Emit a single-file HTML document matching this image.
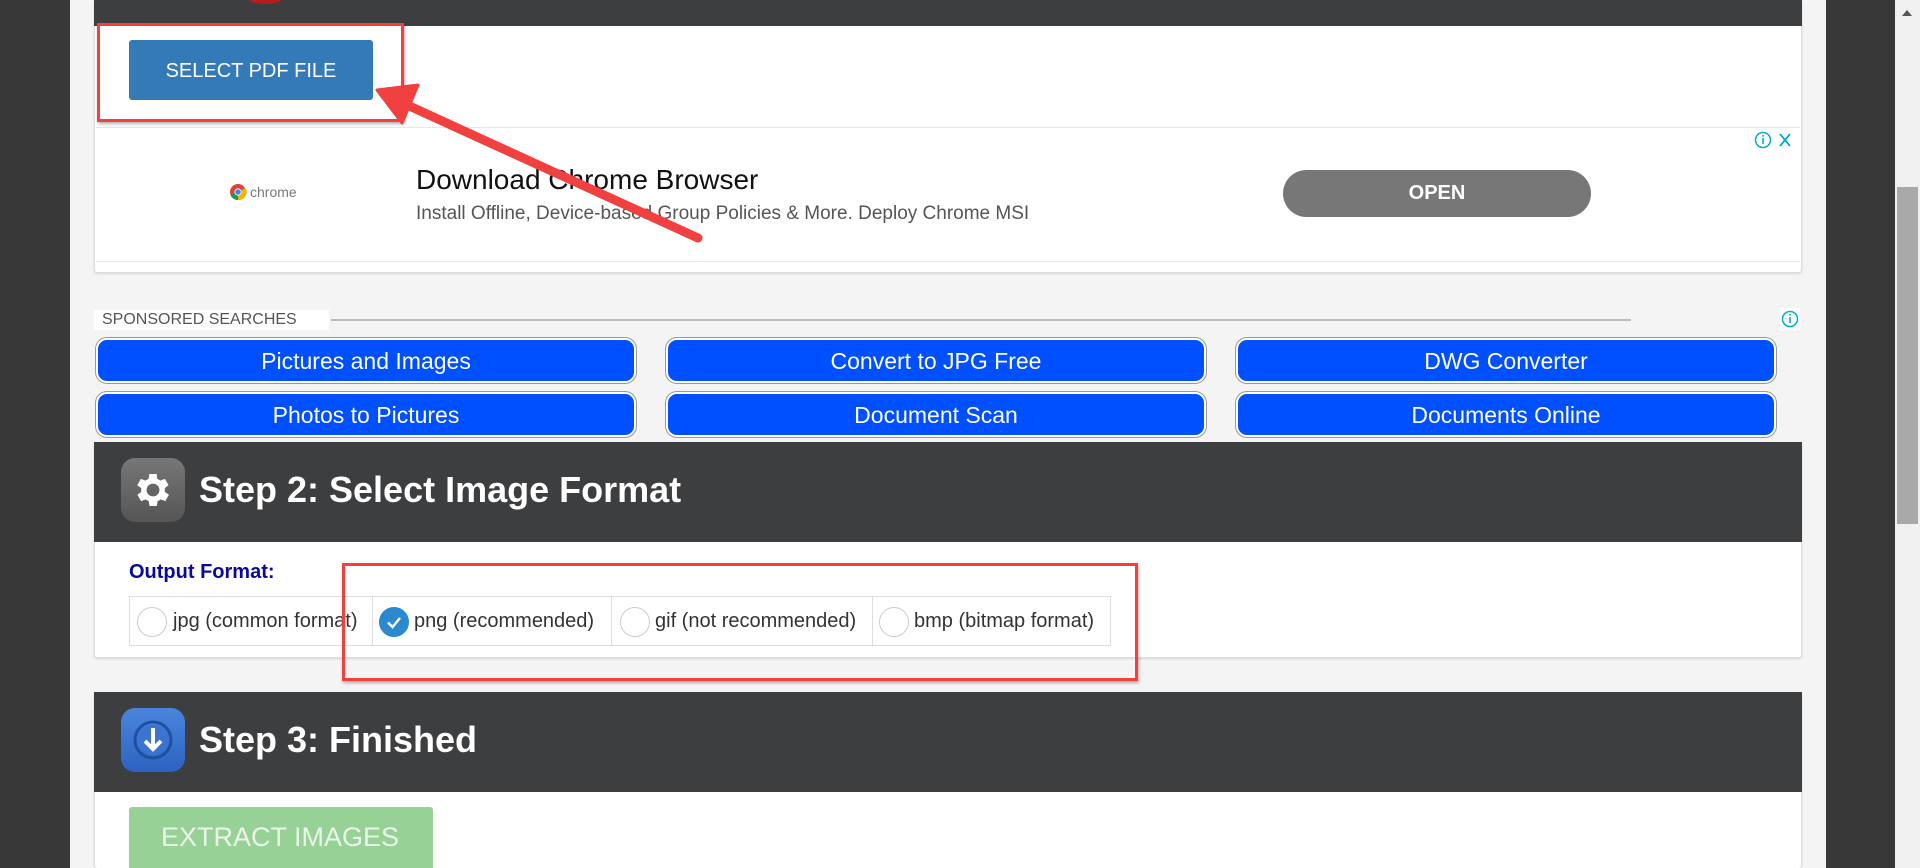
<!DOCTYPE html>
<html style="overflow:hidden;width:1920px;height:868px"><head><meta charset="utf-8"><style>
*{margin:0;padding:0;box-sizing:border-box}
body{width:1920px;height:868px;overflow:hidden;position:relative;background:#383838;font-family:"Liberation Sans",Arial,sans-serif}
.a{position:absolute}
.panel{background:#f4f4f4;left:70px;top:0;width:1756px;height:868px}
.card{background:#fff;border:1px solid #ddd;border-radius:3px;box-shadow:0 1px 2px rgba(0,0,0,.12)}
.hdr{background:#3d3e40}
.sb{background:#0050ff;color:#fff;font-size:23px;text-align:center;line-height:42px;border-radius:11px;border:2px solid #fff;box-shadow:0 0 0 1px #999}
.ht{color:#fff;font-weight:bold;font-size:36px}
.cell{top:0;height:49px;border-right:1px solid #ddd;font-size:20px;color:#333;line-height:49px;white-space:nowrap;overflow:hidden}
.rad{display:inline-block;width:30px;height:30px;border:1px solid #ccc;border-radius:50%;vertical-align:middle;margin:0 6px 0 8px;background:#fff}
</style></head><body>
<div class="a panel"></div>
<div class="a" style="left:1895px;top:0;width:25px;height:868px;background:#f0f0f0"></div>
<div class="a" style="left:1897px;top:187px;width:21px;height:337px;background:#a8a8a8"></div>
<div class="a" style="left:1902px;top:10px;width:0;height:0;border-left:5px solid transparent;border-right:5px solid transparent;border-bottom:6px solid #555"></div>

<div class="a card" style="left:94px;top:0;width:1708px;height:273px"></div>
<div class="a hdr" style="left:94px;top:0;width:1708px;height:26px"></div>
<div class="a" style="left:245px;top:-14px;width:40px;height:18px;border-radius:50%;background:#b71c1c"></div>
<div class="a" style="left:129px;top:40px;width:244px;height:60px;background:#337ab7;border-radius:3px;color:#fff;font-size:20px;text-align:center;line-height:62px">SELECT PDF FILE</div>
<div class="a" style="left:97px;top:23px;width:307px;height:99px;border:3px solid #f04040;box-shadow:1px 2px 3px rgba(0,0,0,.3)"></div>
<div class="a" style="left:96px;top:127px;width:1704px;height:1px;background:#e6e6e6"></div>
<div class="a" style="left:96px;top:261px;width:1704px;height:1px;background:#e6e6e6"></div>
<svg class="a" style="left:229px;top:183px" width="18" height="18" viewBox="0 0 18 18"><circle cx="9" cy="9" r="8" fill="#db4437"/><path d="M9 9 L1.5 12 A8 8 0 0 0 9 17Z" fill="#0f9d58"/><path d="M9 9 L9 17 A8 8 0 0 0 16.5 5Z" fill="#f4b400"/><circle cx="9" cy="9" r="3.6" fill="#fff"/><circle cx="9" cy="9" r="2.8" fill="#4285f4"/></svg>
<div class="a" style="left:250px;top:184px;font-size:14px;color:#777">chrome</div>
<div class="a" style="left:416px;top:164px;font-size:28px;color:#111">Download Chrome Browser</div>
<div class="a" style="left:416px;top:203px;font-size:19px;color:#555">Install Offline, Device-based Group Policies &amp; More. Deploy Chrome MSI</div>
<div class="a" style="left:1283px;top:170px;width:308px;height:47px;background:#777;border-radius:24px;color:#fff;font-weight:bold;font-size:20px;text-align:center;line-height:47px">OPEN</div>
<svg class="a" style="left:1754px;top:130px" width="40" height="20"><circle cx="9" cy="10" r="7.5" fill="none" stroke="#00aecd" stroke-width="1.5"/><rect x="8.2" y="8" width="1.6" height="6" fill="#00aecd"/><rect x="8.2" y="5" width="1.6" height="1.6" fill="#00aecd"/><path d="M26 4 L36 16 M36 4 L26 16" stroke="#00aecd" stroke-width="1.8"/></svg>
<svg class="a" style="left:0;top:0" width="800" height="300"><path d="M698 238 L405 104" stroke="#f04040" stroke-width="9" stroke-linecap="round"/><path d="M377 90 L418 85 L402 123 Z" fill="#f04040" stroke="#f04040" stroke-width="3" stroke-linejoin="round"/></svg>

<div class="a" style="left:94px;top:310px;width:235px;height:20px;background:#fff"></div>
<div class="a" style="left:102px;top:311px;font-size:16px;color:#555">SPONSORED SEARCHES</div>
<div class="a" style="left:331px;top:319px;width:1300px;height:2px;background:#bbb"></div>
<svg class="a" style="left:1780px;top:308px" width="20" height="22"><rect width="20" height="22" fill="#fff"/><circle cx="10" cy="11" r="7.5" fill="none" stroke="#00aecd" stroke-width="1.5"/><rect x="9.2" y="9" width="1.6" height="6" fill="#00aecd"/><rect x="9.2" y="6" width="1.6" height="1.6" fill="#00aecd"/></svg>
<div class="a sb" style="left:96px;top:338px;width:540px;height:45px">Pictures and Images</div>
<div class="a sb" style="left:666px;top:338px;width:540px;height:45px">Convert to JPG Free</div>
<div class="a sb" style="left:1236px;top:338px;width:540px;height:45px">DWG Converter</div>
<div class="a sb" style="left:96px;top:392px;width:540px;height:45px">Photos to Pictures</div>
<div class="a sb" style="left:666px;top:392px;width:540px;height:45px">Document Scan</div>
<div class="a sb" style="left:1236px;top:392px;width:540px;height:45px">Documents Online</div>

<div class="a card" style="left:94px;top:442px;width:1708px;height:216px"></div>
<div class="a hdr" style="left:94px;top:442px;width:1708px;height:100px"></div>
<div class="a" style="left:121px;top:458px;width:64px;height:64px;border-radius:14px;background:linear-gradient(#777,#555)"></div>
<svg class="a" style="left:131px;top:468px" width="44" height="44" viewBox="0 0 24 24"><path fill="#fff" d="M19.4 13a7.5 7.5 0 0 0 0-2l2.1-1.6-2-3.5-2.5 1a7.3 7.3 0 0 0-1.7-1L15 3.3h-4l-.4 2.6a7.3 7.3 0 0 0-1.7 1l-2.5-1-2 3.5L6.6 11a7.5 7.5 0 0 0 0 2l-2.1 1.6 2 3.5 2.5-1a7.3 7.3 0 0 0 1.7 1l.4 2.6h4l.4-2.6a7.3 7.3 0 0 0 1.7-1l2.5 1 2-3.5zM13 15.5a3.5 3.5 0 1 1 0-7 3.5 3.5 0 0 1 0 7z" transform="translate(-1 0)"/></svg>
<div class="a ht" style="left:199px;top:469px">Step 2: Select Image Format</div>
<div class="a" style="left:129px;top:561px;font-size:20px;font-weight:bold;color:#0a0a99">Output Format:</div>
<div class="a" style="left:129px;top:596px;width:982px;height:50px;border:1px solid #ddd;background:#fff">
 <div class="a cell" style="left:0;width:243px"><span class="rad" style="margin-left:7px"></span>jpg (common format)</div>
 <div class="a cell" style="left:243px;width:239px"><span class="rad" style="background:#2a8ad0;border-color:#2a8ad0;position:relative;margin-left:6px;margin-right:5px"><svg width="30" height="30" style="position:absolute;left:-1px;top:-1px"><path d="M9 15.5 L13.5 20 L21 11" stroke="#fff" stroke-width="2.5" fill="none"/></svg></span>png (recommended)</div>
 <div class="a cell" style="left:482px;width:261px"><span class="rad" style="margin-right:5px"></span>gif (not recommended)</div>
 <div class="a cell" style="left:743px;width:238px;border-right:none"><span class="rad" style="margin-left:6px;margin-right:5px"></span>bmp (bitmap format)</div>
</div>
<div class="a" style="left:342px;top:563px;width:796px;height:118px;border:3px solid #f04040;box-shadow:1px 2px 3px rgba(0,0,0,.3)"></div>

<div class="a card" style="left:94px;top:692px;width:1708px;height:176px;border-bottom:none"></div>
<div class="a hdr" style="left:94px;top:692px;width:1708px;height:100px"></div>
<div class="a" style="left:121px;top:708px;width:64px;height:64px;border-radius:14px;background:linear-gradient(#4a86dd,#2d62c0)"></div>
<svg class="a" style="left:129px;top:716px" width="48" height="48"><circle cx="24" cy="24" r="18" fill="none" stroke="#1e4fa0" stroke-width="3"/><circle cx="24" cy="24" r="15" fill="#3a74d0"/><path d="M24 12 V33 M16 25 L24 33 L32 25" stroke="#fff" stroke-width="4" fill="none"/></svg>
<div class="a ht" style="left:199px;top:719px">Step 3: Finished</div>
<div class="a" style="left:129px;top:807px;width:304px;height:61px;background:#98d196;border-radius:3px 3px 0 0;color:#eaf6e9;font-size:27px;padding:15px 0 0 32px">EXTRACT IMAGES</div>
</body></html>
